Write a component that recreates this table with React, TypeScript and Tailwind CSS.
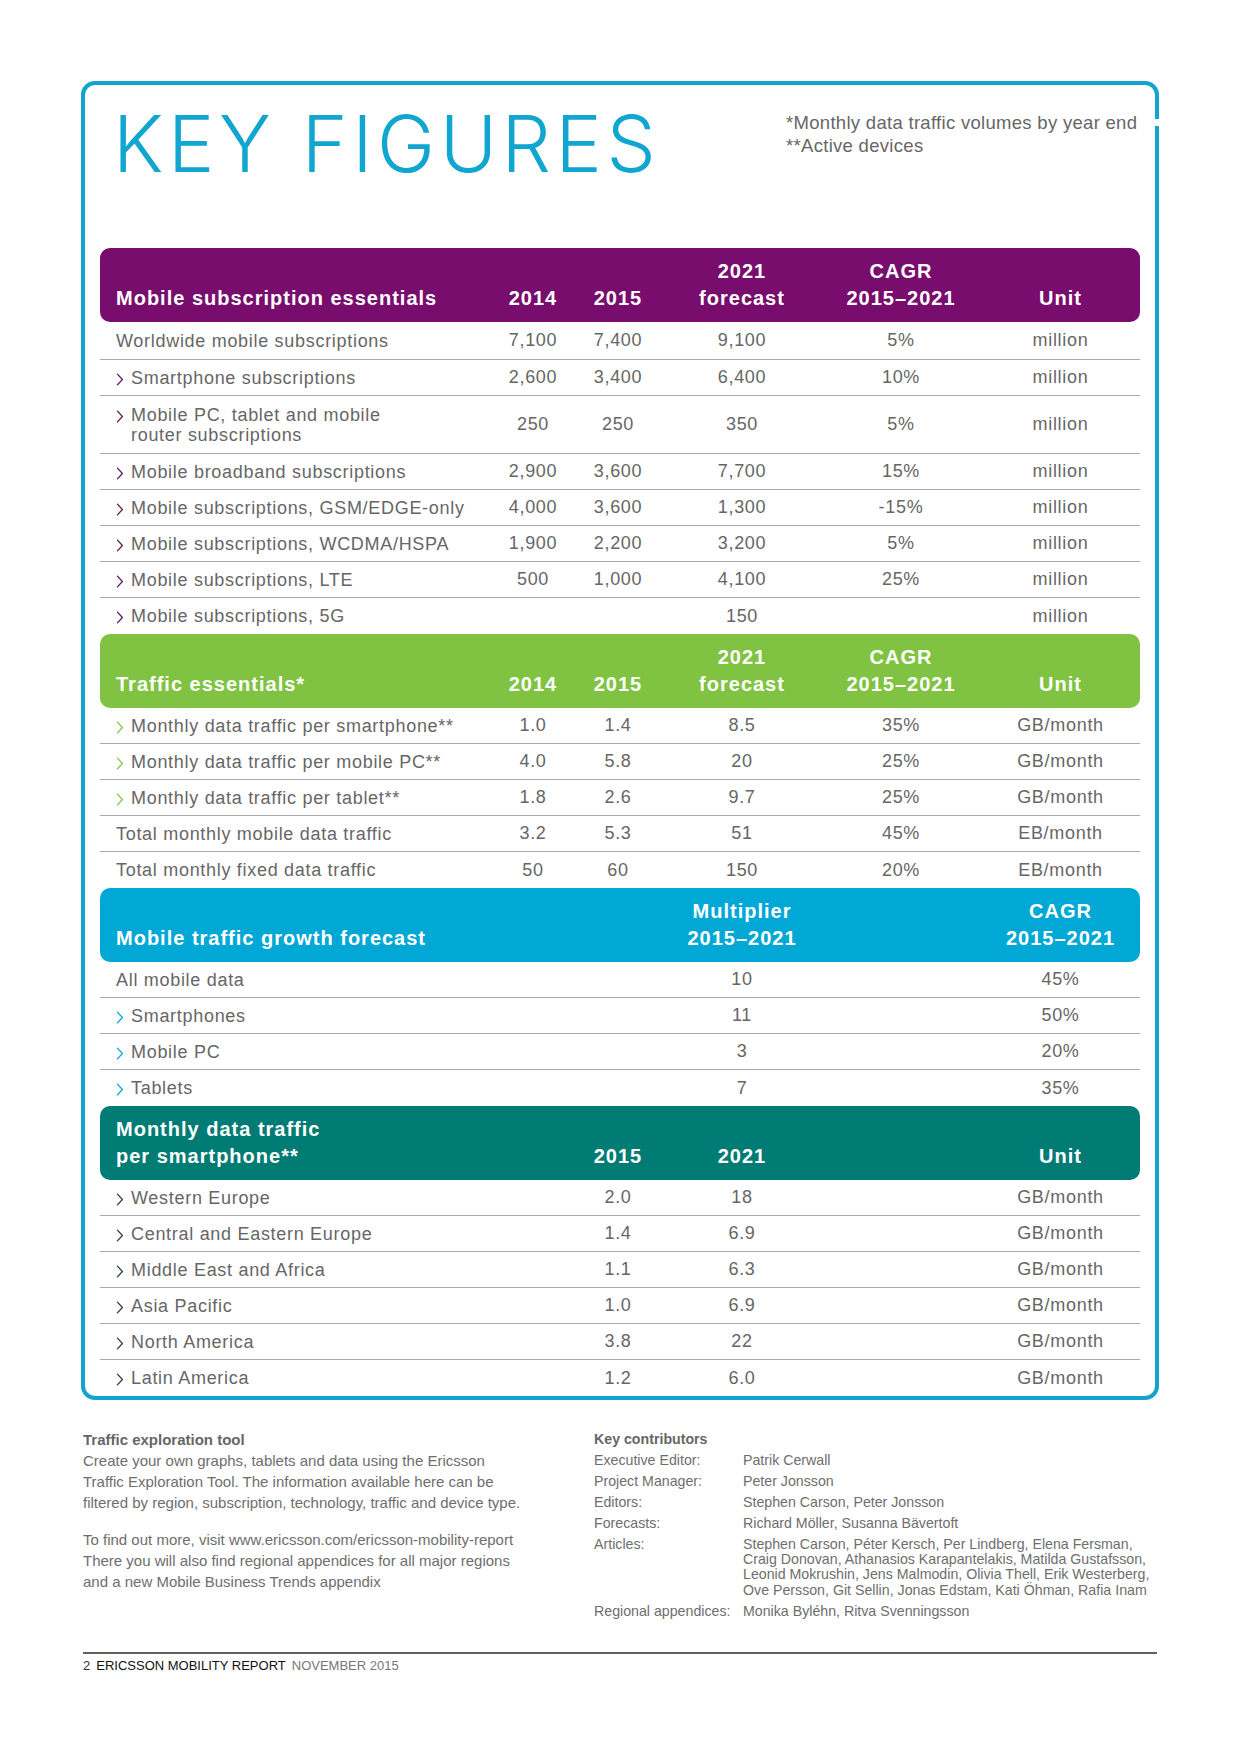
const cols = "grid grid-cols-[393px_80px_90px_158px_160px_159px]";

type Row = { label: string; label2?: string; arrow?: boolean; cells: string[] };
type Section = { title: string; head: string[]; bg: string; arrow: string; rows: Row[] };

const sections: Section[] = [
  {
    title: "Mobile subscription essentials",
    head: ["2014", "2015", "2021\nforecast", "CAGR\n2015–2021", "Unit"],
    bg: "bg-[#790d6d]",
    arrow: "text-[#5a1a55]",
    rows: [
      { label: "Worldwide mobile subscriptions", cells: ["7,100", "7,400", "9,100", "5%", "million"] },
      { label: "Smartphone subscriptions", arrow: true, cells: ["2,600", "3,400", "6,400", "10%", "million"] },
      { label: "Mobile PC, tablet and mobile", label2: "router subscriptions", arrow: true, cells: ["250", "250", "350", "5%", "million"] },
      { label: "Mobile broadband subscriptions", arrow: true, cells: ["2,900", "3,600", "7,700", "15%", "million"] },
      { label: "Mobile subscriptions, GSM/EDGE-only", arrow: true, cells: ["4,000", "3,600", "1,300", "-15%", "million"] },
      { label: "Mobile subscriptions, WCDMA/HSPA", arrow: true, cells: ["1,900", "2,200", "3,200", "5%", "million"] },
      { label: "Mobile subscriptions, LTE", arrow: true, cells: ["500", "1,000", "4,100", "25%", "million"] },
      { label: "Mobile subscriptions, 5G", arrow: true, cells: ["", "", "150", "", "million"] },
    ],
  },
  {
    title: "Traffic essentials*",
    head: ["2014", "2015", "2021\nforecast", "CAGR\n2015–2021", "Unit"],
    bg: "bg-[#80c342]",
    arrow: "text-[#80c342]",
    rows: [
      { label: "Monthly data traffic per smartphone**", arrow: true, cells: ["1.0", "1.4", "8.5", "35%", "GB/month"] },
      { label: "Monthly data traffic per mobile PC**", arrow: true, cells: ["4.0", "5.8", "20", "25%", "GB/month"] },
      { label: "Monthly data traffic per tablet**", arrow: true, cells: ["1.8", "2.6", "9.7", "25%", "GB/month"] },
      { label: "Total monthly mobile data traffic", cells: ["3.2", "5.3", "51", "45%", "EB/month"] },
      { label: "Total monthly fixed data traffic", cells: ["50", "60", "150", "20%", "EB/month"] },
    ],
  },
  {
    title: "Mobile traffic growth forecast",
    head: ["", "", "Multiplier\n2015–2021", "", "CAGR\n2015–2021"],
    bg: "bg-[#02a8d5]",
    arrow: "text-[#02a8d5]",
    rows: [
      { label: "All mobile data", cells: ["", "", "10", "", "45%"] },
      { label: "Smartphones", arrow: true, cells: ["", "", "11", "", "50%"] },
      { label: "Mobile PC", arrow: true, cells: ["", "", "3", "", "20%"] },
      { label: "Tablets", arrow: true, cells: ["", "", "7", "", "35%"] },
    ],
  },
  {
    title: "Monthly data traffic\nper smartphone**",
    head: ["", "2015", "2021", "", "Unit"],
    bg: "bg-[#017c74]",
    arrow: "text-[#2d3b48]",
    rows: [
      { label: "Western Europe", arrow: true, cells: ["", "2.0", "18", "", "GB/month"] },
      { label: "Central and Eastern Europe", arrow: true, cells: ["", "1.4", "6.9", "", "GB/month"] },
      { label: "Middle East and Africa", arrow: true, cells: ["", "1.1", "6.3", "", "GB/month"] },
      { label: "Asia Pacific", arrow: true, cells: ["", "1.0", "6.9", "", "GB/month"] },
      { label: "North America", arrow: true, cells: ["", "3.8", "22", "", "GB/month"] },
      { label: "Latin America", arrow: true, cells: ["", "1.2", "6.0", "", "GB/month"] },
    ],
  },
];

const contributors = [
  ["Executive Editor:", ["Patrik Cerwall"]],
  ["Project Manager:", ["Peter Jonsson"]],
  ["Editors:", ["Stephen Carson, Peter Jonsson"]],
  ["Forecasts:", ["Richard Möller, Susanna Bävertoft"]],
  [
    "Articles:",
    [
      "Stephen Carson, Péter Kersch, Per Lindberg, Elena Fersman,",
      "Craig Donovan, Athanasios Karapantelakis, Matilda Gustafsson,",
      "Leonid Mokrushin, Jens Malmodin, Olivia Thell, Erik Westerberg,",
      "Ove Persson, Git Sellin, Jonas Edstam, Kati Öhman, Rafia Inam",
    ],
  ],
  ["Regional appendices:", ["Monika Byléhn, Ritva Svenningsson"]],
] as const;

function Chevron({ className }: { className: string }) {
  return (
    <svg aria-hidden="true" viewBox="0 0 8 14" className={`mr-[7px] mt-[5px] h-[13px] w-[8px] shrink-0 ${className}`} fill="none" stroke="currentColor" strokeWidth="1.4">
      <path d="M1.2 1.2 6.6 7l-5.4 5.8" strokeLinecap="round" strokeLinejoin="round" />
    </svg>
  );
}

function Table({ s, first }: { s: Section; first?: boolean }) {
  return (
    <div>
      <div className={`${cols} h-[74px] items-end rounded-[10px] pb-[10px] text-[20px] font-bold leading-[27px] tracking-[1px] text-white ${s.bg}`}>
        <div className="whitespace-pre-line pl-4">{s.title}</div>
        {s.head.map((h, i) => (
          <div key={i} className="whitespace-pre-line text-center">
            {h}
          </div>
        ))}
      </div>
      {s.rows.map((r, i) => (
        <div
          key={r.label}
          className={`${cols} items-center text-[18px] tracking-[0.7px] text-[#666] ${
            r.label2 ? "h-[58px]" : first && i === 0 ? "h-[38px]" : "h-9"
          } ${i < s.rows.length - 1 ? "border-b border-[#a9a9a9]" : ""}`}
        >
          <div className="flex items-start pl-4 leading-[20px]">
            {r.arrow && <Chevron className={s.arrow} />}
            <span>
              {r.label}
              {r.label2 && (
                <>
                  <br />
                  {r.label2}
                </>
              )}
            </span>
          </div>
          {r.cells.map((c, j) => (
            <div key={j} className="text-center">
              {c}
            </div>
          ))}
        </div>
      ))}
    </div>
  );
}

export default function App() {
  return (
    <div className="flex h-[1754px] w-[1240px] flex-col bg-white font-['Liberation_Sans',Arial,sans-serif]">
      <div className="relative ml-[81px] mt-[81px] w-[1078px] rounded-[14px] border-4 border-[#12a4cf] px-[15px]">
        <span className="absolute right-[-4px] top-[34px] h-[7px] w-[4px] bg-white" />
        <div className="grid h-[163px] grid-cols-[686px_1fr]">
          <h1 className="pl-[13px] pt-[20px] font-['Inter',sans-serif] text-[78px] font-light leading-none tracking-[4.5px] text-[#11a6cf]">
            KEY FIGURES
          </h1>
          <div className="pt-[26px] text-[18.5px] leading-[23px] tracking-[0.3px] text-[#666]">
            <p>*Monthly data traffic volumes by year end</p>
            <p>**Active devices</p>
          </div>
        </div>
        {sections.map((s, i) => (
          <Table key={s.title} s={s} first={i === 0} />
        ))}
      </div>

      <div className="mt-[29px] grid grid-cols-[511px_1fr] pl-[83px] text-[#6e6e6e]">
        <div className="text-[15px] leading-[21px]">
          <p className="font-bold text-[#666]">Traffic exploration tool</p>
          <p>
            Create your own graphs, tablets and data using the Ericsson
            <br />
            Traffic Exploration Tool. The information available here can be
            <br />
            filtered by region, subscription, technology, traffic and device type.
          </p>
          <p className="mt-4">
            To find out more, visit www.ericsson.com/ericsson-mobility-report
            <br />
            There you will also find regional appendices for all major regions
            <br />
            and a new Mobile Business Trends appendix
          </p>
        </div>
        <div className="grid grid-cols-[149px_1fr] content-start gap-y-[5.5px] pt-[3px] text-[14.2px] leading-[15.4px]">
          <p className="col-span-2 font-bold text-[#666]">Key contributors</p>
          {contributors.map(([label, lines]) => (
            <div key={label} className="contents">
              <p>{label}</p>
              <p>
                {lines.map((l) => (
                  <span key={l} className="block whitespace-nowrap">
                    {l}
                  </span>
                ))}
              </p>
            </div>
          ))}
        </div>
      </div>

      <div className="mb-[80px] ml-[83px] mt-auto w-[1074px] border-t-2 border-[#5f5f5f] pt-[4px] text-[13px] leading-[16px]">
        <span className="text-[#333]">2</span>
        <span className="ml-[6px] text-[#111]">ERICSSON MOBILITY REPORT</span>
        <span className="ml-[6px] text-[#777]">NOVEMBER 2015</span>
      </div>
    </div>
  );
}
